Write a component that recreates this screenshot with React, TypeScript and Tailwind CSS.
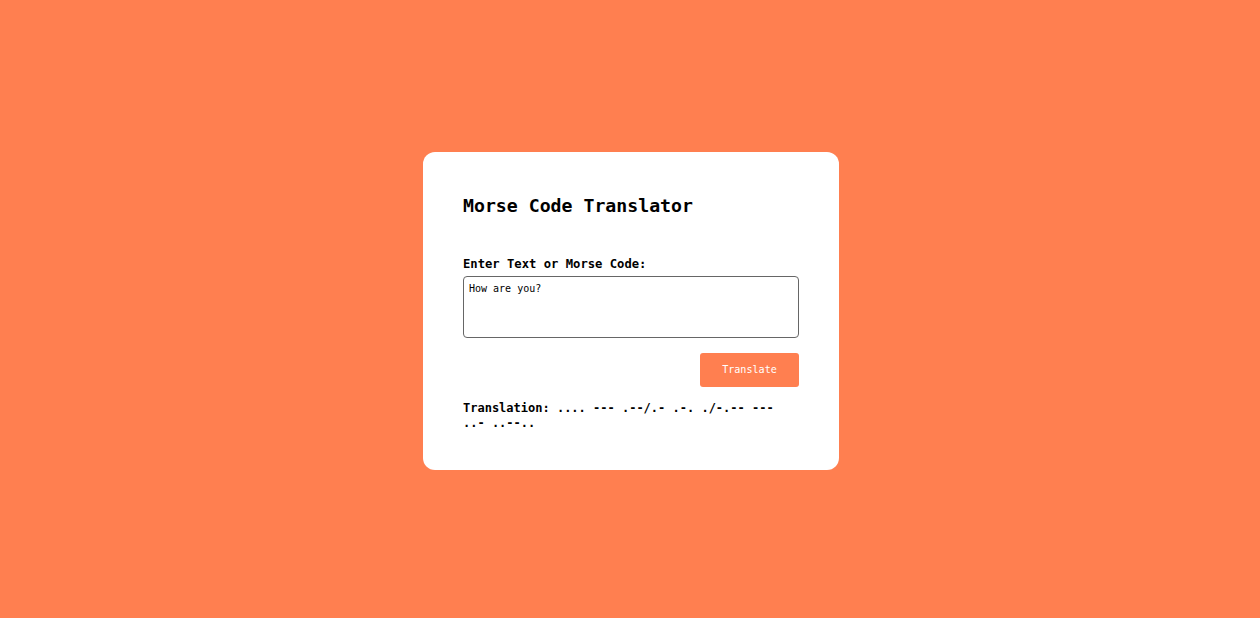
import React, { useState } from "react";

const MORSE: Record<string, string> = {
  A: ".-", B: "-...", C: "-.-.", D: "-..", E: ".", F: "..-.", G: "--.", H: "....",
  I: "..", J: ".---", K: "-.-", L: ".-..", M: "--", N: "-.", O: "---", P: ".--.",
  Q: "--.-", R: ".-.", S: "...", T: "-", U: "..-", V: "...-", W: ".--", X: "-..-",
  Y: "-.--", Z: "--..", "?": "..--..", ".": ".-.-.-", ",": "--..--",
};

const toMorse = (s: string) =>
  s
    .trim()
    .split(/\s+/)
    .map((w) =>
      w
        .toUpperCase()
        .split("")
        .map((c) => MORSE[c] ?? "")
        .join(" ")
    )
    .join("/");

const mono = "font-['Consolas','DejaVu_Sans_Mono',monospace]";

export default function App() {
  const [text, setText] = useState("How are you?");
  const [result, setResult] = useState(toMorse("How are you?"));

  return (
    <div className={`min-h-screen w-full bg-[#ff7f50] flex items-center justify-center ${mono}`}>
      <div className="w-[416px] bg-white rounded-[12px] px-10 pt-10 pb-[39px] mt-[4px] ml-[2px]">
        <h1 className="text-[18.2px] leading-[28px] font-bold text-black">Morse Code Translator</h1>

        <label className="block mt-[36px] text-[12.2px] leading-[16px] font-bold text-black">
          Enter Text or Morse Code:
        </label>
        <textarea
          value={text}
          onChange={(e) => setText(e.target.value)}
          className="mt-[4px] block w-full h-[62px] resize-none rounded-[4px] border border-[#666] px-[5px] py-[5px] text-[10px] leading-[13px] text-black outline-none"
        />

        <div className="flex justify-end mt-[15px]">
          <button
            onClick={() => setResult(toMorse(text))}
            className="w-[99px] h-[34px] rounded-[3px] bg-[#ff7f50] text-white text-[10.1px]"
          >
            Translate
          </button>
        </div>

        <p className="mt-[14px] text-[12px] leading-[15px] font-bold text-black break-words">
          Translation: {result}
        </p>
      </div>
    </div>
  );
}
